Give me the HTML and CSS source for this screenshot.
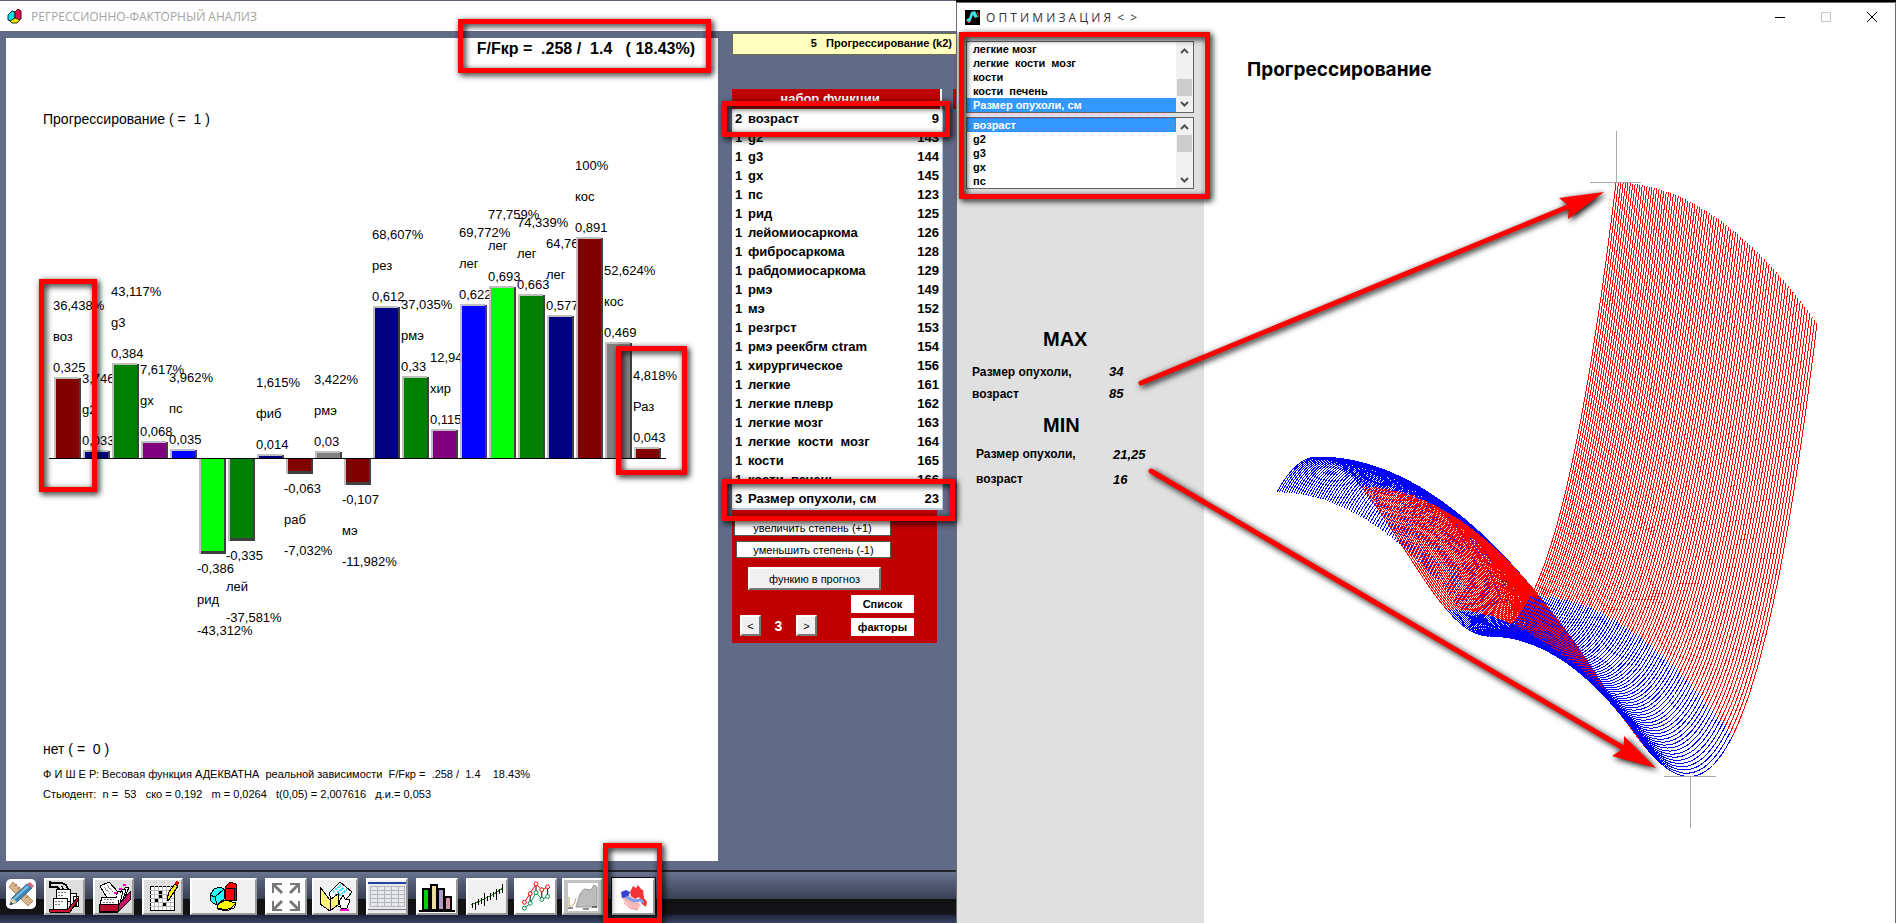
FILE: index.html
```html
<!DOCTYPE html>
<html lang="ru">
<head>
<meta charset="utf-8">
<title>Регрессионно-факторный анализ</title>
<link rel="stylesheet" href="styles.css">
</head>
<body>
<div class="desktop">
  <section class="win win-left">
    <header class="titlebar">
      <svg class="app-icon" width="16" height="16" viewBox="0 0 16 16"><path d="M1 7l4-4 3 1v6l-4 3-3-1z" fill="#00e5ee" stroke="#123" /><path d="M8 4l3-3 3 2v8l-4 1-2-2z" fill="#e0104c" stroke="#401"/><path d="M3 13l5-3 5 2-3 3H5z" fill="#f5e500" stroke="#330"/></svg>
      <h1 class="title-muted">РЕГРЕССИОННО-ФАКТОРНЫЙ АНАЛИЗ</h1>
    </header>
    <div class="work">
      <main class="sheet">
        <p class="fisher-top">F/Fкр =&nbsp; .258 /&nbsp; 1.4 &nbsp; ( 18.43%)</p>
        <h2 class="axis-name">Прогрессирование ( =&nbsp; 1 )</h2>
        <svg class="bars" id="bars" width="712" height="600" viewBox="6 134 712 600"></svg>
        <p class="axis-name">нет ( =&nbsp; 0 )</p>
        <p class="stat">Ф И Ш Е Р: Весовая функция АДЕКВАТНА&nbsp; реальной зависимости&nbsp; F/Fкр =&nbsp; .258 /&nbsp; 1.4 &nbsp;&nbsp; 18.43%</p>
        <p class="stat">Стьюдент:&nbsp; n =&nbsp; 53 &nbsp; ско = 0,192 &nbsp; m = 0,0264 &nbsp; t(0,05) = 2,007616 &nbsp; д.и.= 0,053</p>
      </main>
      <aside class="side">
        <div class="target">5 &nbsp; Прогрессирование (k2)</div>
        <div class="set-head"><span class="set-title">набор функции</span><span class="sliver"></span></div>
        <table class="factors"><tbody id="factors"></tbody></table>
        <div class="controls">
          <button class="flat b-up">увеличить степень (+1)</button>
          <button class="flat b-down">уменьшить степень (-1)</button>
          <button class="raised b-func">функию в прогноз</button>
          <div class="control-row">
            <div class="stepper"><button class="raised sq">&lt;</button><output class="num">3</output><button class="raised sq">&gt;</button></div>
            <div class="pair"><button class="white">Список</button><button class="white">факторы</button></div>
          </div>
        </div>
      </aside>
    </div>
    <nav class="toolbar">
      <button class="tb tb-round" aria-label="Инструменты"><svg width="26" height="26" viewBox="0 0 26 26"><path d="M5 1l20 19-5 5L1 6z" fill="#d8b48a" stroke="#b98d5f"/><path d="M7 5l2-2M10 8l2-2M14 13l2-2M18 17l2-2" stroke="#8f6a40"/><path d="M2 24l2-7L19 3l5 4L9 21z" fill="#3d86b8" stroke="#2a5f88"/><path d="M6 18L20 5" stroke="#7fc0e4" stroke-width="2"/><path d="M19 3l3-2 4 4-2 2z" fill="#d8697a"/><path d="M2 24l2-7 5 4z" fill="#e8cfa6"/><path d="M2 24l1-3 2 2z" fill="#234"/></svg></button>
      <button class="tb g1" aria-label="Запись"><svg width="34" height="33" viewBox="0 0 34 33" shape-rendering="crispEdges"><path d="M2 1v7M2 3h12l4 2 2 4-2 1-3-1-1-3M2 7h7l2 2 3 1" fill="none" stroke="#000" stroke-width="1.500"/><path d="M22 13h6v12h-6zM25 16h5v10h-5z" fill="#fff" stroke="#000"/><path d="M8 9h14v12H8z" fill="#fff" stroke="#000"/><path d="M5 18h14v11H5z" fill="#fff" stroke="#000"/><path d="M10 12h9M10 15h6M7 21h9M7 24h6" stroke="#777" stroke-dasharray="2 1"/><path d="M1 29h19l9-11 2 1-9 13H2z" fill="#d01030" stroke="#000"/></svg></button>
      <button class="tb g1" aria-label="Картотека"><svg width="36" height="33" viewBox="0 0 36 33" shape-rendering="crispEdges"><path d="M3 24l19 1 12-13v8L22 32H3z" fill="#c8106a" stroke="#000"/><path d="M3 24h19v7H4z" fill="#b8102c" stroke="#000"/><path d="M4 6l9-4 10 11-3 4-9 1z" fill="#fff" stroke="#000"/><path d="M8 7l6 7M11 5l6 7" stroke="#888" stroke-dasharray="1 1"/><path d="M6 17h16l1 7H4z" fill="#fff" stroke="#000"/><path d="M20 15l3-4h4l-3 12M24 13l3-4h3l-3 11M27 10l3-3h3l-4 10" fill="#fff" stroke="#000"/><path d="M8 19h10M7 22h12" stroke="#777" stroke-dasharray="2 1"/><path d="M27 5h3M23 9h3M18 13h3" stroke="#f0c" stroke-width="2"/></svg></button>
      <button class="tb g1" aria-label="Правка"><svg width="34" height="33" viewBox="0 0 34 33" shape-rendering="crispEdges"><path d="M4 6h24v24H4z" fill="#fff" stroke="#000"/><path d="M8 6v24M12 6v24M16 6v24M20 6v24M24 6v24M4 10h24M4 14h24M4 18h24M4 22h24M4 26h24" stroke="#bbb"/><path d="M13 11h3v3h-3zM13 15h3v3h-3zM9 19h3v3H9zM17 23h3v3h-3z"/><path d="M21 19l2-7 6-8 3 2-6 9-4 6z" fill="#ffe600" stroke="#000"/><path d="M28 3l3-2 2 2-2 3z" fill="#e00"/></svg></button>
      <button class="tb g2 wide" aria-label="Диаграмма"><svg width="30" height="31" viewBox="0 0 30 31" shape-rendering="crispEdges"><path d="M1 14l4-6 6-2 4 2v10l-7 6-4-2-3-3z" fill="#2ff" stroke="#000"/><path d="M1 14l5 2 9-8M6 16l2 8" fill="none" stroke="#000"/><path d="M16 6l5-5 6 2v4l1 12-12 1z" fill="#f00" stroke="#000"/><path d="M16 7h11M25 8v11" fill="none" stroke="#000"/><path d="M8 24l8-5 11 3-5 5-6 2-7-2z" fill="#ff0" stroke="#000"/><path d="M8 25l1 3 8 2 8-3 2-4" stroke="#000" fill="none"/></svg></button>
      <button class="tb g3 gap" aria-label="Развернуть"><svg width="32" height="32" viewBox="0 0 32 32" fill="none" stroke="#777" stroke-width="3"><path d="M3 12V3h9M20 3h9v9M3 20v9h9M29 20v9h-9" stroke-width="2"/><path d="M4 4l8 8M28 4l-8 8M4 28l8-8M28 28l-8-8"/></svg></button>
      <button class="tb g2 mid" aria-label="Папка"><svg width="38" height="33" viewBox="0 0 38 33" shape-rendering="crispEdges"><path d="M13 13L24 2l12 10-12 15-8-4z" fill="#fff" stroke="#000"/><path d="M17 12l8-7M19 15l9-8M21 18l10-9" stroke="#3df" stroke-width="2" stroke-dasharray="2 1"/><path d="M4 7v17l10 7 8-6V14l-8 6z" fill="#fff27a" stroke="#000"/><path d="M4 7l10 13v11" fill="none" stroke="#000"/><path d="M25 28l-2-6 4-7 2 4 5 1-3 8z" fill="#fff" stroke="#000"/><path d="M24 30h9" stroke="#f0c" stroke-width="2"/></svg></button>
      <button class="tb g2 gap" aria-label="Таблица"><svg width="40" height="32" viewBox="0 0 40 32" shape-rendering="crispEdges"><path d="M1 1h38v30H1z" fill="#e8e9ec"/><path d="M1 2h38" stroke="#24439a" stroke-width="2"/><path d="M3 5h34v20H3zM3 9h34M3 13h34M3 17h34M3 21h34M10 5v20M17 5v20M24 5v20M31 5v20" fill="none" stroke="#b4b6bc"/><path d="M1 28h38" stroke="#777"/></svg></button>
      <button class="tb g3 gap" aria-label="Гистограмма"><svg width="38" height="32" viewBox="0 0 38 32" shape-rendering="crispEdges"><path d="M5 8h6v21H5z" fill="#0c1" stroke="#000" stroke-width="2"/><path d="M13 4h6v25h-6z" fill="#eedf98" stroke="#000" stroke-width="2"/><path d="M20 8h6v21h-6z" fill="#b39ac4" stroke="#000" stroke-width="2"/><path d="M27 16h6v13h-6z" fill="#d896ae" stroke="#000" stroke-width="2"/><path d="M1 30h36" stroke="#000" stroke-width="2"/></svg></button>
      <button class="tb g2 gap" aria-label="Ряд"><svg width="38" height="32" viewBox="0 0 38 32" shape-rendering="crispEdges"><path d="M3 24L16 18l10-5 9-6" stroke="#180" fill="none"/><path d="M4.500 22v5M7.500 21v8M10.500 18v6M13.500 17v6M16.500 12v13M19.500 15v5M22.500 12v7M25.500 11v5M28.500 8v11M31.500 8v5M34.500 3v9" fill="none" stroke="#000"/></svg></button>
      <button class="tb g3 line" aria-label="Линии"><svg width="38" height="33" viewBox="0 0 38 34"><path d="M13 24V14M19 13V4M25 20V10M31 17V7" stroke="#000"/><path d="M7 23l6-9 6-10 6 6 6-3" fill="none" stroke="#f00"/><path d="M7 29l6-5 6-11 6 7 6-3" fill="none" stroke="#084"/><g fill="#fff" stroke="#f00"><circle cx="7" cy="23" r="2"/><circle cx="13" cy="14" r="2"/><circle cx="19" cy="4" r="2"/><circle cx="25" cy="10" r="2"/><circle cx="31" cy="7" r="2"/></g><g fill="#fff" stroke="#084"><circle cx="7" cy="29" r="2"/><circle cx="13" cy="24" r="2"/><circle cx="19" cy="13" r="2"/><circle cx="25" cy="20" r="2"/><circle cx="31" cy="17" r="2"/></g></svg></button>
      <button class="tb g4" aria-label="Область"><svg width="38" height="32" viewBox="0 0 38 32"><path d="M4 2h30v28H4z" fill="#fff"/><path d="M12 26l4-13 4-5 7 1 3-5 3 2v20z" fill="#bdbdbd" stroke="#999"/><path d="M5 16v9c4 1 6-3 7-8" fill="none" stroke="#b89c60"/><path d="M4 27h5M19 28h6M28 26h5" stroke="#222"/></svg></button>
      <button class="tb g3 last" aria-label="Оптимизация"><svg width="28" height="28" viewBox="0 0 28 28"><path d="M10 9l3-6 3 2 2-3 3 4 2 1 1 8 3 4-1 5-4-3-3-7-4 2-4-3z" fill="#f23338"/><path d="M2 14l6-3 7 5 6 6-4 5-7-3-6-6z" fill="#f8b9b4"/><path d="M1 9l5-2 4 2-2 5-6 1z" fill="#3a40d0"/><path d="M6 14l8 4 7-1 2 3" stroke="#7aa0ee" stroke-width="3" fill="none"/><path d="M4 20l6 5 8 2" stroke="#f28a86" fill="none"/></svg></button>
    </nav>
  </section>

  <section class="win win-right">
    <header class="titlebar">
      <svg class="opt-icon" width="15" height="15" viewBox="0 0 15 15"><path d="M0 0h15v15H0z"/><path d="M1 10l3-2 2-6 4-1 3 6-3 1-2-3-2 5-2 3z" fill="#3de0e0"/><path d="M1 10l3 3 2-2M12 2l2 5" stroke="#e22" fill="none"/></svg>
      <h1 class="title-dark">О П Т И М И З А Ц И Я&nbsp; &lt;&nbsp; &gt;</h1>
      <div class="win-buttons">
        <button class="wb" aria-label="Свернуть"><svg width="11" height="11"><path d="M0 5.500h10" stroke="#000"/></svg></button>
        <button class="wb" aria-label="Развернуть окно"><svg width="11" height="11"><path d="M.5.5h9v9h-9z" fill="none" stroke="#c4c4c4"/></svg></button>
        <button class="wb" aria-label="Закрыть"><svg width="11" height="11"><path d="M0 0l10 10M10 0L0 10" stroke="#000"/></svg></button>
      </div>
    </header>
    <div class="opt-body">
      <aside class="opt-side">
        <div class="listbox">
          <select size="5" aria-label="Первый фактор"><option>легкие мозг</option><option>легкие&nbsp; кости&nbsp; мозг</option><option>кости</option><option>кости&nbsp; печень</option><option selected>Размер опухоли, см</option></select>
          <div class="scroll"><svg width="9" height="6"><path d="M1 5l3.500-3.500L8 5" /></svg><span class="thumb low"></span><svg width="9" height="6"><path d="M1 1l3.500 3.500L8 1"/></svg></div>
        </div>
        <div class="listbox">
          <select class="dotted" size="5" aria-label="Второй фактор"><option selected>возраст</option><option>g2</option><option>g3</option><option>gx</option><option>пс</option></select>
          <div class="scroll"><svg width="9" height="6"><path d="M1 5l3.500-3.500L8 5" /></svg><span class="thumb"></span><svg width="9" height="6"><path d="M1 1l3.500 3.500L8 1"/></svg></div>
        </div>
        <div class="extreme max">
          <h2>MAX</h2>
          <dl><dt>Размер опухоли,</dt><dd>34</dd><dt>возраст</dt><dd>85</dd></dl>
        </div>
        <div class="extreme min">
          <h2>MIN</h2>
          <dl><dt>Размер опухоли,</dt><dd>21,25</dd><dt>возраст</dt><dd>16</dd></dl>
        </div>
      </aside>
      <main class="plot">
        <h2 class="plot-title">Прогрессирование</h2>
        <svg class="surface" id="surface" width="690" height="813" viewBox="1205 110 690 813"></svg>
      </main>
    </div>
  </section>

  <svg class="marks" width="1896" height="923" fill="none" stroke="#f00" stroke-width="5">
    <g class="mark"><rect x="460.500" y="21.500" width="248" height="49"/></g>
    <g class="mark"><rect x="724.500" y="103.500" width="223" height="31"/></g>
    <g class="mark"><rect x="724.500" y="481.500" width="228" height="37"/></g>
    <g class="mark"><rect x="41.500" y="281.500" width="53" height="208"/></g>
    <g class="mark"><rect x="618.500" y="348.500" width="66" height="124"/></g>
    <g class="mark"><rect x="605.500" y="845.500" width="54" height="75"/></g>
    <g class="mark"><rect x="961.500" y="34.500" width="246" height="162"/></g>
    <g class="mark"><path d="M1141 383L1570 206" stroke-linecap="round"/><path d="M1604 192l-45 6 10 8-1 13z" fill="#f00" stroke="none"/></g>
    <g class="mark"><path d="M1151 471L1625 749" stroke-linecap="round"/><path d="M1656 768l-32-32 0 12-12 8z" fill="#f00" stroke="none"/></g>
  </svg>
</div>
<script src="app.js"></script>
</body>
</html>
```
FILE: styles.css
```css
* { box-sizing: border-box; }
html, body { height: 100%; }
body { margin: 0; font-family: "Liberation Sans", Arial, sans-serif; color: #000; }
h1, h2, p, dl, dd { margin: 0; font-weight: normal; }
button { font-family: inherit; padding: 0; margin: 0; color: #000; }
svg { display: block; }

.desktop { position: relative; display: flex; min-height: 100vh; background: #000; overflow: hidden; }
.win { display: flex; flex-direction: column; min-width: 0; }
.win-left { flex: 957 1 0; background: #616a87; border-top: 1px solid #5c6070; }
.win-right { flex: 939 1 0; margin-top: 2px; background: #fff; border: 1px solid #6a6c72; border-bottom: 0; }

.titlebar { display: flex; align-items: center; height: 30px; background: #fff; }
.win-right .titlebar { height: 29px; }
.app-icon { margin: 0 8px 0 7px; }
.title-muted { font: 12px "Open Sans", "Noto Sans", sans-serif; color: #a4a4a4; }
.opt-icon { margin: 0 6px 0 8px; }
.title-dark { font: 12px "Open Sans", "Noto Sans", sans-serif; color: #333; }
.win-buttons { display: flex; margin-left: auto; }
.wb { display: flex; align-items: center; justify-content: center; width: 46px; height: 28px; border: 0; background: none; }

.work { display: flex; flex: 1; padding: 7px 0 9px 6px; }
.sheet { flex: 1; background: #fff; min-width: 0; }
.fisher-top { height: 66px; padding: 1px 23px 0 0; line-height: 20px; text-align: right; font-weight: bold; font-size: 16px; }
.axis-name { padding-left: 37px; font-size: 14px; line-height: 30px; }
.bars text { font-size: 13px; }
.stat { padding-left: 37px; font-size: 11px; line-height: 20px; }

.side { flex: 0 0 238px; padding-left: 14px; font-weight: bold; }
.target { height: 22px; margin-top: -5px; padding-right: 4px; border: 1px solid #6b6b50; border-right: 0; background: #ffffc0; font-size: 11px; line-height: 19px; text-align: right; }
.set-head { display: flex; justify-content: space-between; margin-top: 34px; height: 20px; }
.set-title { width: 210px; padding-right: 12px; background: #c00000; border-right: 2px solid #fff; color: #fff; font-size: 13px; line-height: 20px; text-align: center; }
.sliver { width: 3px; background: #c00000; }
.factors { width: 211px; border-collapse: collapse; background: #fff; border-right: 1px solid #b8c8dc; border-bottom: 2px solid #b8c8dc; font-size: 13px; }
.factors td { padding: 0; height: 19px; line-height: 19px; white-space: pre; }
.factors .deg { width: 16px; padding-left: 3px; }
.factors .code { padding-right: 3px; text-align: right; }
.controls { width: 205px; height: 133px; padding-top: 9px; background: #c00000; display: flex; flex-direction: column; align-items: flex-start; }
.flat { height: 17px; border: 1px solid #555; background: #fff; font-size: 11px; line-height: 14px; }
.b-up { width: 157px; margin-left: 2px; }
.b-down { width: 155px; margin: 5px 0 9px 4px; }
.raised { border: 2px solid; border-color: #fff #777 #777 #fff; background: #f0f0f0; font-size: 11px; }
.b-func { width: 133px; height: 23px; margin-left: 16px; }
.control-row { display: flex; align-items: flex-end; margin: 5px 0 0 8px; gap: 34px; }
.stepper { display: flex; align-items: center; }
.sq { width: 21px; height: 21px; }
.num { width: 35px; color: #fff; font-size: 14px; text-align: center; }
.pair { display: flex; flex-direction: column; gap: 5px; }
.white { width: 63px; height: 18px; border: 0; background: #fff; font-size: 11px; font-weight: bold; }

.toolbar { display: flex; align-items: flex-start; height: 53px; padding: 6px 0 0 6px; border-top: 2px solid #23252c; background: linear-gradient(#6b7590 0, #555e78 10px, #3a4053 27px, #121214 27px, #141416 42px, #1d2238 43px, #3d4566 51px); }
.tb { display: flex; align-items: center; justify-content: center; flex: none; width: 41px; height: 37px; margin-right: 8px; border: 2px solid; border-color: #fff #999 #999 #fff; overflow: hidden; }
.tb svg { flex: none; }
.tb-round { width: 30px; height: 30px; border: 0; border-radius: 5px; background: #fff; margin-top: 1px; }
.g1 { background: #dedede; }
.g2 { background: #f1f1f1; }
.g3 { background: #fff; }
.g4 { background: #c3c3c3; margin-right: 9px; }
.g1 + .wide { margin-left: -1px; }
.wide { width: 67px; }
.gap { width: 42px; }
.gap + .mid { width: 46px; margin-left: -3px; }
.line { width: 43px; margin: 0 5px 0 -2px; }
.last { width: 43px; outline: 1px solid #111; }

.opt-body { display: flex; flex: 1; }
.opt-side { flex: 0 0 247px; padding: 9px 10px 0 9px; background: #e0e0e0; }
.listbox { display: flex; height: 72px; margin-bottom: 4px; border: 1px solid #646464; background: #fff; }
.listbox select { flex: 1; min-width: 0; height: 70px; padding: 0; border: 0; outline: 0; border-radius: 0; background: #fff; overflow: hidden; scrollbar-width: none; }
.listbox option { height: 14px; min-height: 14px; padding: 1px 0 0 6px; color: #000; font: bold 11px/13px "Liberation Sans", sans-serif; }
.listbox option:checked { background: linear-gradient(#3399ff, #3399ff); color: #fff; -webkit-text-fill-color: #fff; }
.dotted option:checked { outline: 1px dotted #a86420; outline-offset: -1px; }
.scroll { display: flex; flex-direction: column; align-items: center; width: 17px; padding: 6px 0 5px; background: #f1f1f1; }
.scroll path { fill: none; stroke: #505050; stroke-width: 2; }
.thumb { width: 15px; height: 17px; margin: 5px 0 auto; background: #cdcdcd; }
.thumb.low { margin: auto 0 5px; }
.extreme h2 { padding-left: 77px; font: bold 20px/24px "Liberation Sans", sans-serif; }
.extreme dl { display: grid; grid-template-columns: 143px auto; font-weight: bold; font-size: 12px; line-height: 22px; }
.extreme dt { padding-left: 6px; }
.extreme dd { font-style: italic; font-weight: bold; font-size: 13px; }
.max { margin-top: 138px; }
.max dl { margin-top: 10px; }
.min { margin-top: 8px; }
.min dl { margin: 5px 0 0 4px; line-height: 25px; }
.plot { flex: 1; min-width: 0; }
.plot-title { height: 78px; padding: 23px 0 0 43px; font: bold 19px/30px Inter, sans-serif; }

.marks { position: absolute; left: 0; top: 0; pointer-events: none; }
.mark { filter: drop-shadow(2px 2px 3px #000); }
```
FILE: app.js
```js
const NS = 'http://www.w3.org/2000/svg';
function add(parent, tag, attrs, text) {
  const e = document.createElementNS(NS, tag);
  for (const k in attrs) e.setAttribute(k, attrs[k]);
  if (text) e.textContent = text;
  parent.appendChild(e);
}

const palette = ['#800000', '#000080', '#008000', '#800080', '#0000ff', '#00ff00', '#008000', '#000080', '#800000', '#808080'];
const bars = [
  [0.325, 'воз', '36,438%'], [0.033, 'g2', '3,746%'], [0.384, 'g3', '43,117%'], [0.068, 'gx', '7,617%'],
  [0.035, 'пс', '3,962%'], [-0.386, 'рид', '-43,312%'], [-0.335, 'лей', '-37,581%'], [0.014, 'фиб', '1,615%'],
  [-0.063, 'раб', '-7,032%'], [0.03, 'рмэ', '3,422%'], [-0.107, 'мэ', '-11,982%'], [0.612, 'рез', '68,607%'],
  [0.33, 'рмэ', '37,035%'], [0.115, 'хир', '12,94'], [0.622, 'лег', '69,772%'], [0.693, 'лег', '77,759%'],
  [0.663, 'лег', '74,339%'], [0.577, 'лег', '64,76'], [0.891, 'кос', '100%'], [0.469, 'кос', '52,624%'], [0.043, 'Раз', '4,818%']
];
const chart = document.getElementById('bars');
const base = 458;
bars.forEach(([v, name, pct], i) => {
  const x = 54 + 29 * i;
  const h = Math.max(4, Math.round(Math.abs(v) * 248));
  const color = i === 10 || i === 20 ? palette[0] : palette[i > 10 ? i - 10 : i];
  const label = String(v).replace('.', ',');
  let y;
  if (v > 0) {
    add(chart, 'rect', { x, y: base - h, width: 25, height: h, fill: '#c0c0c0' });
    add(chart, 'rect', { x: x + 25, y: base - h + 1, width: 2, height: h - 1, fill: '#404040' });
    add(chart, 'rect', { x: x + 2, y: base - h + 2, width: 23, height: h - 2, fill: color });
    y = base - h - 5;
    [label, name, pct].forEach((t, k) => add(chart, 'text', { x: x - 1, y: y - 31 * k }, t));
  } else {
    add(chart, 'rect', { x, y: base, width: 27, height: h, fill: '#404040' });
    add(chart, 'rect', { x, y: base, width: 2, height: h, fill: '#c0c0c0' });
    add(chart, 'rect', { x: x + 2, y: base, width: 23, height: h - 3, fill: color });
    y = base + h + 19;
    [label, name, pct].forEach((t, k) => add(chart, 'text', { x: x - 2, y: y + 31 * k }, t));
  }
});
add(chart, 'rect', { x: 49, y: base, width: 617, height: 1, fill: '#000' });

const factors = [
  [2, 'возраст', 9], [1, 'g2', 143], [1, 'g3', 144], [1, 'gx', 145], [1, 'пс', 123], [1, 'рид', 125],
  [1, 'лейомиосаркома', 126], [1, 'фибросаркома', 128], [1, 'рабдомиосаркома', 129], [1, 'рмэ', 149],
  [1, 'мэ', 152], [1, 'резгрст', 153], [1, 'рмэ реекбгм ctram', 154], [1, 'хирургическое', 156],
  [1, 'легкие', 161], [1, 'легкие плевр', 162], [1, 'легкие мозг', 163], [1, 'легкие  кости  мозг', 164],
  [1, 'кости', 165], [1, 'кости  печень', 166], [3, 'Размер опухоли, см', 23]
];
document.getElementById('factors').innerHTML = factors
  .map(([d, n, c]) => `<tr><td class="deg">${d}</td><td>${n}</td><td class="code">${c}</td></tr>`).join('');

/* Response surface: cubic in the first factor, quadratic in the second. */
const surface = document.getElementById('surface');
const x0 = 1278, x1 = 1617, peak = 1318.6, low = 1489.1;
const span = low - peak, drop = 179, c = drop * 6 / span ** 3;
const cubic = x => { const t = x - peak; return 457 + c * (span * t * t / 2 - t * t * t / 3); };
const curves = 84;
for (let n = curves; n >= 0; n--) {
  const v = n / curves, dx = 201 * v, dy = 140.5 * v * v;
  for (let q = 0; q < 4; q++) {
    const a = x0 + (x1 - x0) * q / 4, b = x0 + (x1 - x0) * (q + 1) / 4;
    const pts = [];
    for (let k = 0; k <= 60; k++) {
      const x = a + (b - a) * k / 60;
      pts.push((x + dx).toFixed(1) + ',' + (cubic(x) + dy).toFixed(1));
    }
    add(surface, 'polyline', { points: pts.join(' '), fill: 'none', stroke: q % 2 ? '#f00' : '#00f', 'shape-rendering': 'crispEdges' });
  }
}
[[1617, 131, 1, 52], [1591, 182, 51, 1], [1691, 777, 1, 51], [1665, 776, 52, 1]].forEach(([x, y, width, height]) =>
  add(surface, 'rect', { x, y, width, height, fill: '#a8a8a8' }));
```
